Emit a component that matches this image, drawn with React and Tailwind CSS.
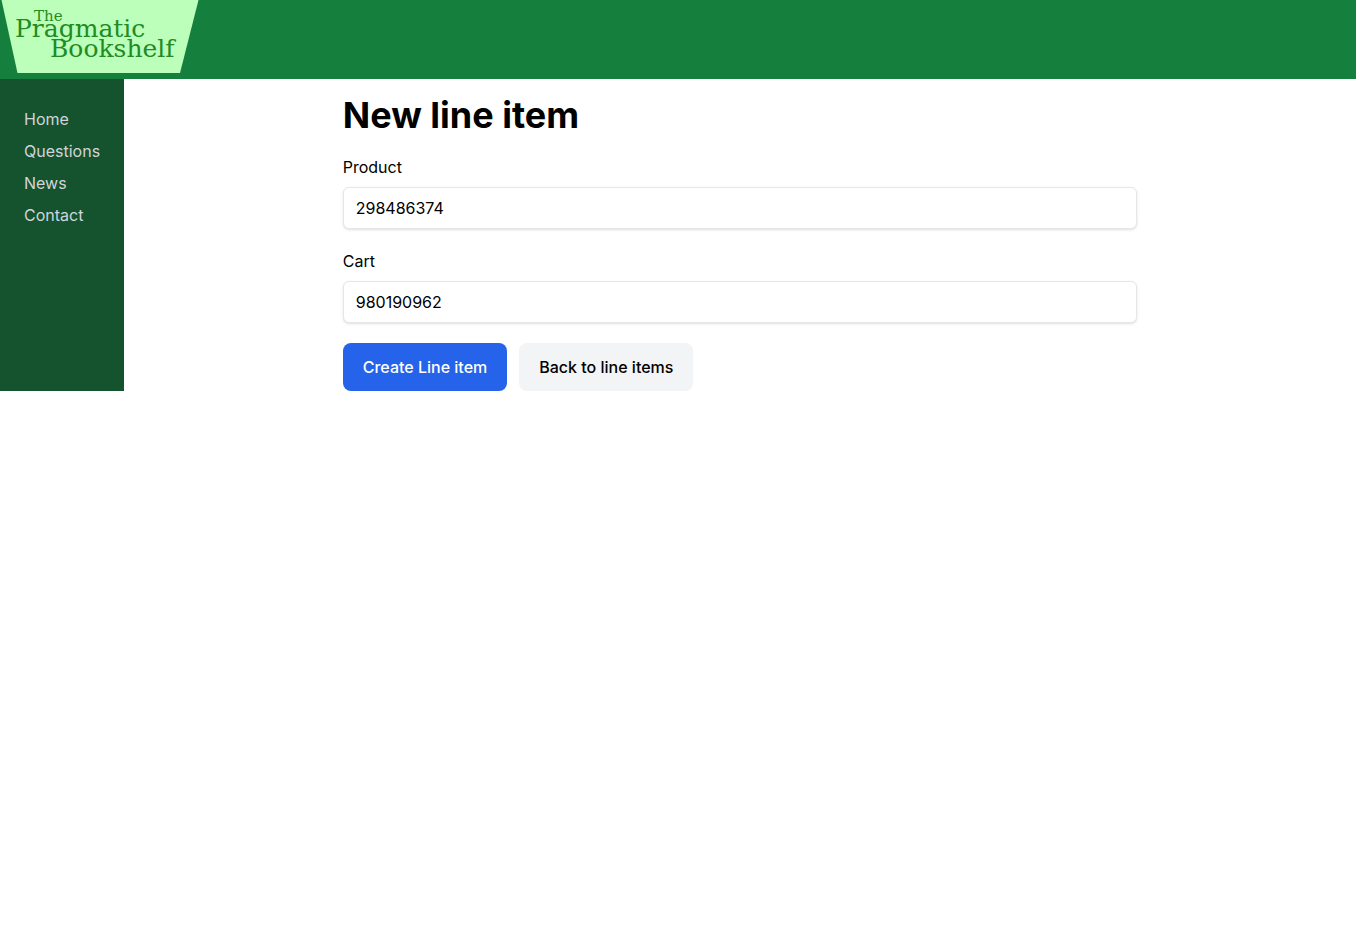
import React from "react";

const links = ["Home", "Questions", "News", "Contact"];

function Logo() {
  return (
    <svg width="200" height="73" viewBox="0 0 200 73" role="img" aria-label="The Pragmatic Bookshelf" className="block">
      <path d="M1.5 0H198.5L180 73H17.5Z" fill="#bfb" />
      <g fill="#228b22" fontFamily="'DejaVu Serif', serif">
        <text x="34" y="21" fontSize="15">The</text>
        <text x="15" y="37" fontSize="25">Pragmatic</text>
        <text x="50" y="57" fontSize="25">Bookshelf</text>
      </g>
    </svg>
  );
}

function Field({ id, label, value }) {
  return (
    <div className="my-5">
      <label htmlFor={id} className="inline-block">{label}</label>
      <input
        id={id}
        type="text"
        defaultValue={value}
        className="mt-2 block w-full rounded-md border border-gray-200 bg-white px-3 py-2 shadow-sm outline-none"
      />
    </div>
  );
}

export default function App() {
  return (
    <div className="font-['Inter',sans-serif] text-base text-black">
      <header className="bg-[#15803d] pb-1.5">
        <Logo />
      </header>
      <section className="flex">
        <nav className="bg-[#14532d] p-6">
          <ul className="text-[#d1d5db]">
            {links.map((l) => (
              <li key={l} className="leading-8"><a href="#">{l}</a></li>
            ))}
          </ul>
        </nav>
        <main className="flex-1 px-5 pt-4">
          <div className="mx-auto w-full md:w-2/3">
            <h1 className="text-4xl font-bold">New line item</h1>
            <form onSubmit={(e) => e.preventDefault()}>
              <Field id="product" label="Product" value="298486374" />
              <Field id="cart" label="Cart" value="980190962" />
              <div className="flex gap-3">
                <button type="submit" className="rounded-lg bg-[#2563eb] px-5 py-3 font-medium text-white">Create Line item</button>
                <a href="#" className="rounded-lg bg-gray-100 px-5 py-3 font-medium">Back to line items</a>
              </div>
            </form>
          </div>
        </main>
      </section>
    </div>
  );
}
